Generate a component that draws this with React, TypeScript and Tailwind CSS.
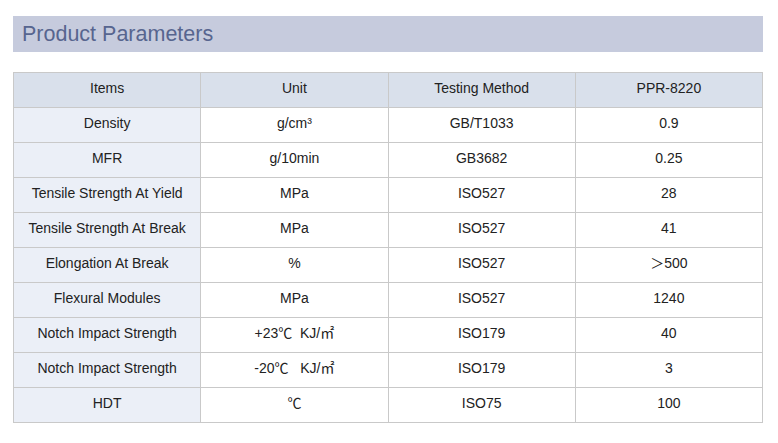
const rows: [string, string, string, string][] = [
  ['Density', 'g/cm³', 'GB/T1033', '0.9'],
  ['MFR', 'g/10min', 'GB3682', '0.25'],
  ['Tensile Strength At Yield', 'MPa', 'ISO527', '28'],
  ['Tensile Strength At Break', 'MPa', 'ISO527', '41'],
  ['Elongation At Break', '%', 'ISO527', '＞500'],
  ['Flexural Modules', 'MPa', 'ISO527', '1240'],
  ['Notch Impact Strength', '+23℃  KJ/㎡', 'ISO179', '40'],
  ['Notch Impact Strength', '-20℃   KJ/㎡', 'ISO179', '3'],
  ['HDT', '℃', 'ISO75', '100'],
]

const cell = 'border border-[#c9c9c9] text-center pb-[3px]'

export default function App() {
  return (
    <div className="w-[778px] h-[443px] bg-white pt-4 pl-[13px] font-['Liberation_Sans',Arial,'Noto_Sans_CJK_SC',sans-serif]">
      <div className="w-[750px] h-9 bg-[#c6cbdd] pl-[9px] pt-px flex items-center">
        <h1 className="text-[21.5px] text-[#57658f] leading-none">Product Parameters</h1>
      </div>

      <table className="mt-5 w-[750px] border-collapse table-fixed text-[14px] text-[#222]">
        <thead>
          <tr className="h-[35px] bg-[#d9e0eb]">
            {['Items', 'Unit', 'Testing Method', 'PPR-8220'].map(h => (
              <th key={h} className={`${cell} font-normal`}>
                {h}
              </th>
            ))}
          </tr>
        </thead>
        <tbody>
          {rows.map((r, i) => (
            <tr key={i} className="h-[35px]">
              <td className={`${cell} bg-[#ebeff7]`}>{r[0]}</td>
              <td className={`${cell} whitespace-pre`}>{r[1]}</td>
              <td className={cell}>{r[2]}</td>
              <td className={cell}>{r[3]}</td>
            </tr>
          ))}
        </tbody>
      </table>
    </div>
  )
}
